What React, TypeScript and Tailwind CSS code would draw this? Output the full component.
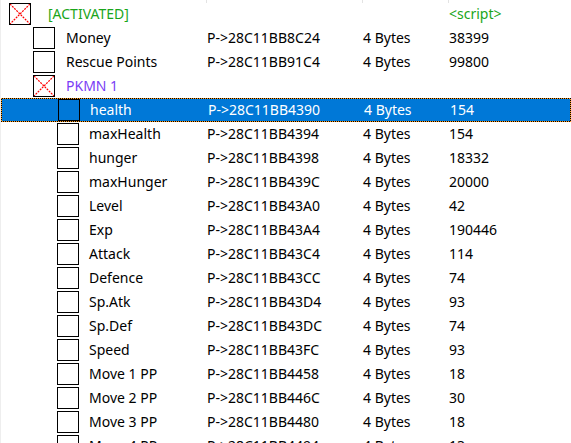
import React from "react";

type Entry = {
    desc: string;
    level: 0 | 1 | 2;
    address?: string;
    type?: string;
    value?: string;
    checked?: boolean;
    color?: string;
    valueColor?: string;
};

const entries: Entry[] = [
    { desc: "[ACTIVATED]", level: 0, checked: true, color: "text-[#1aa51a]", value: "<script>", valueColor: "text-[#1aa51a]" },
    { desc: "Money", level: 1, address: "P->28C11BB8C24", type: "4 Bytes", value: "38399" },
    { desc: "Rescue Points", level: 1, address: "P->28C11BB91C4", type: "4 Bytes", value: "99800" },
    { desc: "PKMN 1", level: 1, checked: true, color: "text-[#7a3cf5]" },
    { desc: "health", level: 2, address: "P->28C11BB4390", type: "4 Bytes", value: "154" },
    { desc: "maxHealth", level: 2, address: "P->28C11BB4394", type: "4 Bytes", value: "154" },
    { desc: "hunger", level: 2, address: "P->28C11BB4398", type: "4 Bytes", value: "18332" },
    { desc: "maxHunger", level: 2, address: "P->28C11BB439C", type: "4 Bytes", value: "20000" },
    { desc: "Level", level: 2, address: "P->28C11BB43A0", type: "4 Bytes", value: "42" },
    { desc: "Exp", level: 2, address: "P->28C11BB43A4", type: "4 Bytes", value: "190446" },
    { desc: "Attack", level: 2, address: "P->28C11BB43C4", type: "4 Bytes", value: "114" },
    { desc: "Defence", level: 2, address: "P->28C11BB43CC", type: "4 Bytes", value: "74" },
    { desc: "Sp.Atk", level: 2, address: "P->28C11BB43D4", type: "4 Bytes", value: "93" },
    { desc: "Sp.Def", level: 2, address: "P->28C11BB43DC", type: "4 Bytes", value: "74" },
    { desc: "Speed", level: 2, address: "P->28C11BB43FC", type: "4 Bytes", value: "93" },
    { desc: "Move 1 PP", level: 2, address: "P->28C11BB4458", type: "4 Bytes", value: "18" },
    { desc: "Move 2 PP", level: 2, address: "P->28C11BB446C", type: "4 Bytes", value: "30" },
    { desc: "Move 3 PP", level: 2, address: "P->28C11BB4480", type: "4 Bytes", value: "18" },
    { desc: "Move 4 PP", level: 2, address: "P->28C11BB4494", type: "4 Bytes", value: "13" },
];

const SELECTED = 4;

const indent = ["pl-[8px]", "pl-[32px]", "pl-[56px]"];
const gap = ["ml-[17px]", "ml-[11px]", "ml-[10px]"];

function CheckBox({ checked, selected }: { checked?: boolean; selected?: boolean }) {
    return (
        <div className={`h-[22px] w-[22px] shrink-0 border border-black ${selected ? "bg-[#0078d7]" : "bg-white"}`}>
            {checked && (
                <svg viewBox="0 0 20 20" className="h-full w-full">
                    <line x1="0" y1="0" x2="20" y2="20" stroke="#ff0000" strokeWidth="1.2" strokeDasharray="2 1" />
                    <line x1="20" y1="0" x2="0" y2="20" stroke="#ff0000" strokeWidth="1.2" strokeDasharray="2 1" />
                </svg>
            )}
        </div>
    );
}

function Row({ item, selected }: { item: Entry; selected: boolean }) {
    const text = selected ? "text-white" : "text-black";
    const inner = (
        <div className={`flex h-full items-center ${selected ? "bg-[#0078d7]" : ""}`}>
            <div className={`flex w-[206px] shrink-0 items-center ${indent[item.level]}`}>
                <CheckBox checked={item.checked} selected={selected} />
                <span className={`${gap[item.level]} whitespace-nowrap ${item.color ?? text}`}>{item.desc}</span>
            </div>
            <div className={`w-[156px] shrink-0 whitespace-nowrap ${text}`}>{item.address}</div>
            <div className={`w-[86px] shrink-0 whitespace-nowrap ${text}`}>{item.type}</div>
            <div className={`whitespace-nowrap ${item.valueColor ?? text}`}>{item.value}</div>
        </div>
    );
    if (selected) {
        return (
            <div className="h-6 bg-[repeating-conic-gradient(#000_0_25%,#ff9a1a_0_50%)] bg-[length:2px_2px] p-px">
                {inner}
            </div>
        );
    }
    return <div className="h-6 py-px">{inner}</div>;
}

export default function App() {
    return (
        <div className="h-[443px] w-[571px] overflow-hidden border-l border-[#eeeeee] bg-white font-['Noto_Sans',sans-serif] text-[14px] leading-[22px]">
            <div className="relative h-[2px]">
                <div className="absolute left-[205px] top-0 h-[3px] w-px bg-[#e3e3e3]" />
                <div className="absolute left-[361px] top-0 h-[3px] w-px bg-[#e3e3e3]" />
                <div className="absolute left-[447px] top-0 h-[3px] w-px bg-[#e3e3e3]" />
            </div>
            {entries.map((e, i) => (
                <Row key={e.desc} item={e} selected={i === SELECTED} />
            ))}
        </div>
    );
}
